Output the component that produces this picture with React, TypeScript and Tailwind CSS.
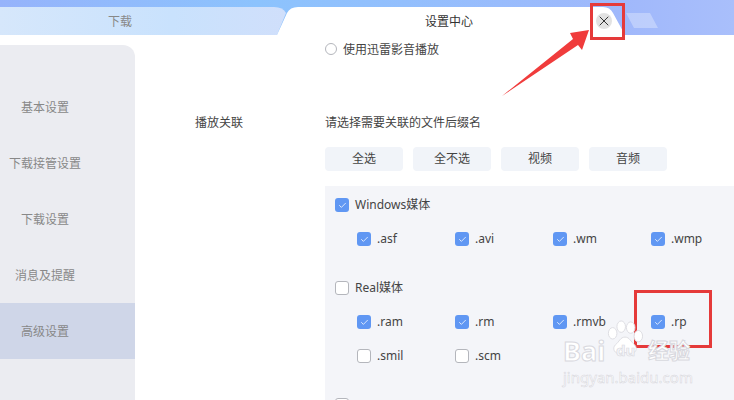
import { Check, X } from 'lucide-react'

const FONT = "font-['Noto_Sans','Noto_Sans_CJK_SC',sans-serif]"

const MENU = ['基本设置', '下载接管设置', '下载设置', '消息及提醒', '高级设置']
const BUTTONS = ['全选', '全不选', '视频', '音频']

function Box({ checked, label, small }: { checked: boolean; label: string; small?: boolean }) {
  return (
    <div className={`flex items-center gap-[6px] ${small ? 'w-[98px] shrink-0' : ''}`}>
      {checked ? (
        <span className="w-[14px] h-[14px] rounded-[3px] bg-[#6097f3] flex items-center justify-center shrink-0">
          <Check size={9} strokeWidth={2} className="text-white" />
        </span>
      ) : (
        <span className="w-[14px] h-[14px] rounded-[3px] bg-white border border-[#b4b6bc] shrink-0" />
      )}
      <span className="text-[12px] leading-[16px] text-[#444]">{label}</span>
    </div>
  )
}

function Header() {
  return (
    <div className="relative h-[35px] flex items-end bg-[linear-gradient(90deg,#96b3fb_0%,#8cc3fd_35%,#93bffd_55%,#a0b8fb_85%,#a9bffb_100%)]">
      <div className="relative w-[287px] h-[28px] pt-[2px] flex items-center justify-center bg-[linear-gradient(90deg,#d6e7fb_0%,#c9e2fd_60%,#d0dffb_100%)] [clip-path:path('M0_0H274Q283_0_286_6L277_28H0Z')]">
        <span className="text-[12px] text-[#888] pr-[47px]">下载</span>
      </div>
      <div className="relative -ml-[10px] w-[348px] h-[35px] pt-[9px] flex items-center justify-center bg-white [clip-path:path('M0_35L10_13Q13_7_21_7H326Q333_7_336_13L348_35Z')]">
        <span className="text-[12px] text-[#333] pr-[4px]">设置中心</span>
        <span className="absolute left-[319px] top-[13px] w-[16px] h-[16px] rounded-full bg-[#e2e2e2] flex items-center justify-center">
          <X size={16} strokeWidth={1.5} className="text-[#333]" />
        </span>
      </div>
      <div className="self-start mt-[13px] ml-[1px] w-[32px] h-[15px] bg-white/30 [clip-path:polygon(0_0,24px_0,32px_100%,8px_100%)]" />
    </div>
  )
}

function Sidebar() {
  return (
    <div className="w-[135px] h-[355px] mt-[10px] pt-[34px] bg-[#ebecf1] rounded-tr-[12px] shrink-0">
      {MENU.map((m, i) => (
        <div
          key={m}
          className={`h-[56px] pt-[2px] flex items-center justify-center pr-[45px] text-[12px] text-[#888] ${i === 4 ? 'bg-[#cfd6e8]' : ''}`}
        >
          {m}
        </div>
      ))}
    </div>
  )
}

function Content() {
  return (
    <div className="flex-1 min-w-0 h-[365px] overflow-hidden">
      <div className="ml-[190px] mt-[7px] flex items-center gap-[6px] h-[14px]">
        <span className="w-[12px] h-[12px] rounded-full border border-[#b4b6bc]" />
        <span className="text-[12px] text-[#444] pt-[2px]">使用迅雷影音播放</span>
      </div>
      <div className="flex items-center mt-[59px] h-[16px] text-[12px] text-[#444]">
        <span className="w-[190px] pl-[60px]">播放关联</span>
        <span>请选择需要关联的文件后缀名</span>
      </div>
      <div className="ml-[190px] mt-[16px] flex gap-[10px]">
        {BUTTONS.map(b => (
          <div key={b} className="w-[78px] h-[24px] rounded-[4px] bg-[#f1f4f9] flex items-center justify-center text-[12px] text-[#444]">
            {b}
          </div>
        ))}
      </div>
      <div className="ml-[190px] mt-[15px] pt-[11px] pl-[10px] h-[240px] bg-[#f4f5f9]">
        <Box checked label="Windows媒体" />
        <div className="flex pl-[22px] mt-[18px]">
          {['.asf', '.avi', '.wm', '.wmp'].map(x => <Box key={x} small checked label={x} />)}
        </div>
        <div className="mt-[33px]">
          <Box checked={false} label="Real媒体" />
        </div>
        <div className="flex pl-[22px] mt-[18px]">
          {['.ram', '.rm', '.rmvb', '.rp'].map(x => <Box key={x} small checked label={x} />)}
        </div>
        <div className="flex pl-[22px] mt-[18px]">
          {['.smil', '.scm'].map(x => <Box key={x} small checked={false} label={x} />)}
        </div>
        <div className="mt-[34px] flex items-center gap-[6px]">
          <span className="w-[14px] h-[14px] rounded-[3px] bg-white border border-[#b4b6bc]" />
        </div>
      </div>
    </div>
  )
}

function Annotations() {
  return (
    <>
      <div className="absolute left-[590px] top-[3px] w-[35px] h-[37px] border-[3px] border-[#e53a3a]" />
      <div className="absolute left-[634px] top-[290px] w-[78px] h-[58px] border-[3px] border-[#e53a3a]" />
      <svg className="absolute left-[495px] top-[20px]" width="100" height="80" viewBox="0 0 100 80">
        <path d="M7 76 L78 19 L75 13 L94 10 L87 30 L83 25 Z" fill="#f03c3c" />
      </svg>
      {/* watermark */}
      <div className="absolute left-[562px] top-[318px] w-[132px] h-[68px] text-white">
        <svg className="absolute left-[44px] top-[2px]" width="38" height="38" viewBox="0 0 40 40">
          <g fill="#fff" stroke="#dcdce2" strokeWidth="1">
            <ellipse cx="7" cy="14" rx="4.5" ry="6" />
            <ellipse cx="16" cy="7" rx="4.5" ry="6" />
            <ellipse cx="26" cy="8" rx="4.5" ry="6" />
            <ellipse cx="34" cy="17" rx="4.5" ry="6" />
            <path d="M20 18c5 0 6 5 10 8 4 4 1 10-5 9-3-1-7-1-10 0-6 1-9-5-5-9 4-3 5-8 10-8z" />
          </g>
        </svg>
        <span className="absolute left-[1px] top-[19px] text-[27px] leading-[27px] font-bold [-webkit-text-stroke:1px_#d8d8de]">Bai</span>
        <span className="absolute left-[54px] top-[24px] text-[15px] leading-[16px] font-bold text-[#f4f5f9] [-webkit-text-stroke:0.6px_#d8d8de]">du</span>
        <span className="absolute left-[86px] top-[21px] text-[21px] leading-[22px] font-bold [-webkit-text-stroke:1px_#d8d8de]">经验</span>
        <span className="absolute left-[1px] top-[51px] text-[15px] leading-[16px] text-white [-webkit-text-stroke:0.5px_#d4d4da] whitespace-nowrap">jingyan.baidu.com</span>
      </div>
    </>
  )
}

export default function App() {
  return (
    <div className={`${FONT} relative w-[734px] h-[400px] overflow-hidden bg-white`}>
      <Header />
      <div className="flex">
        <Sidebar />
        <Content />
      </div>
      <Annotations />
    </div>
  )
}
